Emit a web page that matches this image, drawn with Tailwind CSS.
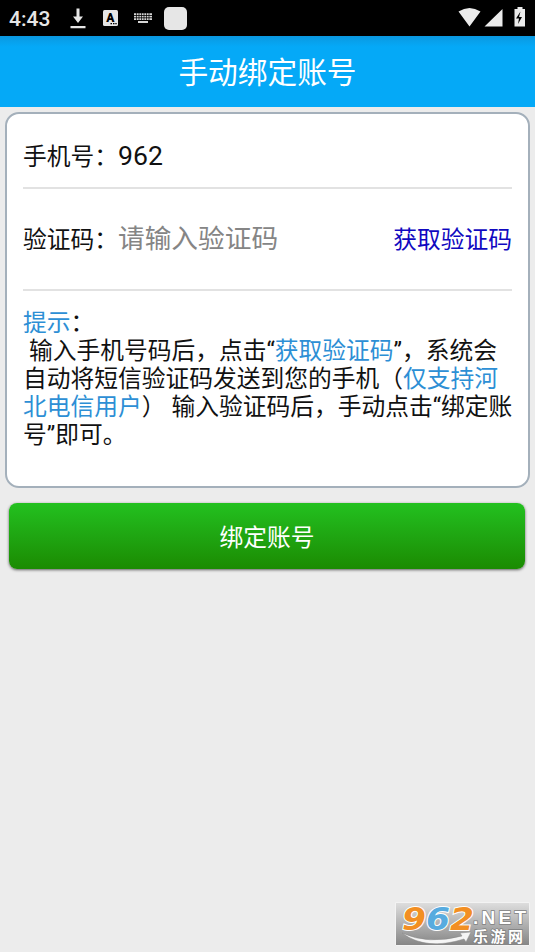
<!DOCTYPE html>
<html lang="zh-CN">
<head>
<meta charset="utf-8">
<meta name="viewport" content="width=device-width, initial-scale=1">
<title>手动绑定账号</title>
<script src="https://cdn.jsdelivr.net/npm/@tailwindcss/browser@4"></script>
</head>
<body class="flex h-[952px] w-[535px] flex-col overflow-hidden bg-[#ececec] font-[Roboto,'Noto_Sans_CJK_SC',sans-serif] text-[23.75px] text-[#111]">
  <div class="flex h-9 shrink-0 items-center bg-black pr-2 pl-[9px] text-[#e6e6e6]">
    <span class="w-[60px] pt-px text-[21px] font-medium leading-9">4:43</span>
    <svg class="h-9 w-[18px]" viewBox="0 0 18 36" fill="#e6e6e6"><path d="M7.500 8.500h3v8h3.500l-5 6.500-5-6.500h3.500zM1.500 26h15v2.200h-15z"/></svg>
    <svg class="ml-4 h-9 w-[15px]" viewBox="0 0 15 36"><rect y="10" width="15" height="16" rx="1.500" fill="#e6e6e6"/><text x="7.300" y="21.500" text-anchor="middle" font-family="Roboto" font-weight="900" font-size="12">A</text><path d="M7.500 23h1.500v1.300H7.500zM10 23h1.500v1.300H10zM12.300 23h1.400v1.300h-1.400z" fill="#000"/></svg>
    <svg class="ml-[15px] h-9 w-5" viewBox="0 0 20 36" fill="#d5d5d5"><path d="M1 13.300h18v6.700H1zM5 21h10v2H5z"/><path d="M1 15.500h18M1 17.800h18" stroke="#000" stroke-width=".8"/><path d="M3.500 13v7M6 13v7M8.500 13v7M11 13v7M13.500 13v7M16 13v7" stroke="#000" stroke-width=".7"/></svg>
    <span class="ml-[11px] h-[23px] w-[23px] rounded-[5px] bg-[#e6e6e6]"></span>
    <svg class="ml-auto h-9 w-[70px]" viewBox="457 0 70 36" fill="#ebebeb"><path d="M458.500 11.500q11-7 22 0L469.500 26.500zM502.500 9v17.500h-18zM514.500 9h3V7h5v2h2.500v17.500h-10.500z"/><path d="M520.500 11.500l-4.500 7h3l-1 5.500 4-7h-3z" fill="#000"/></svg>
  </div>
  <header class="flex h-[71px] shrink-0 items-center justify-center bg-[#05a9f7] bg-linear-to-b from-[#0a98e0] to-[#05a9f7] to-15% pt-[2px] text-[29.7px] leading-[69px] text-white">手动绑定账号</header>
  <main class="flex flex-col px-[5px] pt-[5px]">
    <section class="flex h-[376px] flex-col rounded-[14px] border-2 border-[#a4b0bb] bg-white px-4">
      <div class="flex h-[75px] shrink-0 items-center border-b-2 border-[#e2e2e2] pt-[13px]">
        <span class="w-[95px] pt-[2px]">手机号：</span><span class="pb-[2px] text-[26.600px]">962</span>
      </div>
      <div class="flex h-[102px] shrink-0 items-center border-b-2 border-[#e2e2e2] pt-[2px]">
        <span class="w-[95px] pt-[2px]">验证码：</span>
        <span class="pb-[2px] text-[26.700px] text-[#858585]">请输入验证码</span>
        <span class="ml-auto pt-[2px] text-[#1008c0]">获取验证码</span>
      </div>
      <div class="pt-[19px] leading-[27.900px]">
        <p class="whitespace-pre"><span class="text-[#2d8fd5]">提示</span>：</p>
        <p class="whitespace-pre"> 输入手机号码后，点击“<span class="text-[#2d8fd5]">获取验证码</span>”，系统会</p>
        <p class="whitespace-pre">自动将短信验证码发送到您的手机（<span class="text-[#2d8fd5]">仅支持河</span></p>
        <p class="whitespace-pre"><span class="text-[#2d8fd5]">北电信用户</span>） 输入验证码后，手动点击“绑定账</p>
        <p class="whitespace-pre">号”即可。</p>
      </div>
    </section>
    <button class="mr-[5px] ml-1 mt-[15px] h-[66px] rounded-[8px] bg-linear-to-b from-[#23c11f] to-[#1b8b02] pt-[5px] text-white shadow-[0_1px_3px_rgba(0,0,0,0.6)]">绑定账号</button>
  </main>
  <footer class="mt-auto mr-[5px] mb-[6px] ml-auto h-11 w-[135px]">
    <svg class="h-11 w-[135px] overflow-visible" viewBox="0 0 135 44" role="img" aria-label="962.NET 乐游网">
      <defs><linearGradient id="plate" x2="0" y2="1"><stop stop-color="#dedede"/><stop offset="1" stop-color="#858585"/></linearGradient></defs>
      <path d="M.5.5h134v43H.5z" fill="url(#plate)" stroke="#f3f3f3"/>
      <g font-family="DejaVu Sans,sans-serif" font-weight="700" font-style="italic" font-size="32" stroke="#fff" stroke-width="2" paint-order="stroke">
        <text x="7" y="27.500" textLength="24" lengthAdjust="spacingAndGlyphs" fill="#f28f23">9</text>
        <text x="31" y="27.500" textLength="24" lengthAdjust="spacingAndGlyphs" fill="#57abdf">6</text>
        <text x="55" y="27.500" textLength="24" lengthAdjust="spacingAndGlyphs" fill="#f28f23">2</text>
      </g>
      <g fill="#fff" stroke="#808080" stroke-width="1.500" paint-order="stroke" font-weight="700">
        <text x="78" y="21.500" font-family="Liberation Sans,sans-serif" font-size="19" textLength="53">.NET</text>
        <text x="78" y="39.500" font-family="Noto Sans CJK SC,sans-serif" font-size="15" textLength="50">乐游网</text>
      </g>
      <path d="M7 31Q33 43 67 34l-2-3 11-1-5 10-2-3Q31 49 7 31z" fill="#f5f5f5" stroke="#888" stroke-width=".5"/>
    </svg>
  </footer>
</body>
</html>
